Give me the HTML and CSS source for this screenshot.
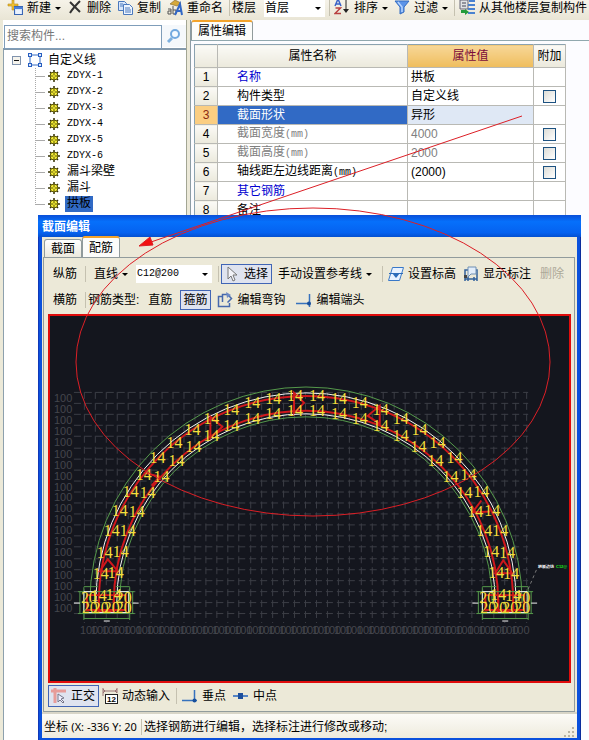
FILE: index.html
```html
<!DOCTYPE html>
<html lang="zh-CN">
<head>
<meta charset="utf-8">
<title>截面编辑</title>
<link rel="stylesheet" href="styles.css">
</head>
<body>
<div class="app">
  <header class="toolbar">
    <button class="tool"><svg class="icon" viewBox="0 0 16 16"><path d="M5 0h2v4h4v2H7v4H5V6H1V4h4z" fill="#f0c030" stroke="#b98a1c" stroke-width=".6"/><rect x="7.500" y="6.500" width="8" height="8" fill="#d5e4fb" stroke="#3a66b5"/><path d="M7 7h9v2H7z" fill="#4b7fd6"/><path d="M9 11h5M9 13h5" stroke="#fff"/></svg>新建<i class="caret"></i></button>
    <button class="tool"><svg class="icon" viewBox="0 0 16 16"><path d="M3 2l10 10M13 1C9 5 6 8 3 13" stroke="#333" stroke-width="2" fill="none"/></svg>删除</button>
    <button class="tool"><svg class="icon" viewBox="0 0 16 16"><path d="M1.500 1.500h6l2 2v7h-8z" fill="#d7e6fb" stroke="#4a78bd"/><path d="M6.500 4.500h6l3 3v7h-9z" fill="#edf4ff" stroke="#4a78bd"/><path d="M3 4h3M3 6h3M8 8h5M8 10h6M8 12h6" stroke="#4a78bd"/></svg>复制</button>
    <button class="tool"><svg class="icon" viewBox="0 0 16 16"><path d="M3 4l5-4 6 3-4 3z" fill="#d6a93b" stroke="#80652b" stroke-width=".6"/><path d="M1 9h3v5H1v-3h3M6 6v8h3v-4H6" stroke="#555" fill="none"/><path d="M8 15l5-11 2 11M10 11h5" stroke="#3267c5" stroke-width="2" fill="none"/></svg>重命名</button>
    <span class="sep"></span>
    <label for="floor">楼层</label>
    <span class="combo floor"><select id="floor"><option>首层</option></select><i class="caret"></i></span>
    <span class="sep"></span>
    <button class="tool"><svg class="icon" viewBox="0 0 16 16"><path d="M1 6l3-7 3 7M2 4h4" stroke="#3a62c8" fill="none" stroke-width="1.500"/><path d="M1.500 8h5L1 13.500h6" stroke="#b94040" fill="none" stroke-width="1.500"/><path d="M12 0v10" stroke="#222"/><path d="M9 9h6l-3 4z" fill="#222"/></svg>排序<i class="caret"></i></button>
    <button class="tool"><svg class="icon" viewBox="0 0 16 16"><path d="M1 1h14l-5 6v5l-4 2V7z" fill="#5c94e8" stroke="#356cc0"/><path d="M4 2l4 5v5" stroke="#b8d5ff" stroke-width="1.500" fill="none"/></svg>过滤<i class="caret"></i></button>
    <span class="sep"></span>
    <button class="tool"><svg class="icon" viewBox="0 0 16 16"><path d="M1 0h8v9H1z" fill="#e0e2e4" stroke="#667"/><path d="M3 3h4M3 6h4" stroke="#445"/><path d="M10 1h6M9 5h7M9 9h7M9 13h7" stroke="#4a82d0" stroke-width="2"/><path d="M2 10h4v-1l4 3-4 3v-2H2z" fill="#249b3b"/></svg>从其他楼层复制构件</button>
  </header>

  <main class="workspace">
    <aside class="browser">
      <div class="search">
        <input type="text" aria-label="搜索构件" placeholder="搜索构件...">
        <button aria-label="搜索"><svg class="icon" viewBox="0 0 16 16"><path d="M6 10l-4 4" stroke="#7db0df" stroke-width="3"/><circle cx="9" cy="6" r="4" fill="#f4faff" stroke="#72a9df" stroke-width="2"/></svg></button>
      </div>
      <div class="tree">
        <div class="root"><svg class="toggle" viewBox="0 0 9 9"><rect x=".5" y=".5" width="8" height="8" fill="#f5f3ec" stroke="#8093ad"/><path d="M2 4.500h5" stroke="#111"/></svg><svg class="icon" viewBox="0 0 16 16"><path d="M3 3h10v10H3z" fill="none" stroke="#346ac4"/><path d="M1 1h4v4H1zM11 1h4v4h-4zM1 11h4v4H1zM11 11h4v4h-4z" fill="#275ec0"/><path d="M2 2h2v2H2zM12 2h2v2h-2zM2 12h2v2H2zM12 12h2v2h-2z" fill="#dfeafa"/></svg>自定义线</div>
        <ul id="members"></ul>
      </div>
    </aside>

    <section class="properties">
      <div class="tabs"><button class="tab active">属性编辑</button></div>
      <div class="sheet">
        <table>
          <colgroup><col class="c-num"><col class="c-name"><col class="c-value"><col class="c-add"></colgroup>
          <thead><tr><th></th><th>属性名称</th><th class="current">属性值</th><th>附加</th></tr></thead>
          <tbody>
            <tr><th>1</th><td class="link">名称</td><td>拱板</td><td></td></tr>
            <tr><th>2</th><td>构件类型</td><td>自定义线</td><td><input type="checkbox" aria-label="附加 构件类型"></td></tr>
            <tr class="selected"><th>3</th><td>截面形状</td><td>异形</td><td></td></tr>
            <tr class="muted"><th>4</th><td>截面宽度<span class="mono">(mm)</span></td><td>4000</td><td><input type="checkbox" aria-label="附加 截面宽度"></td></tr>
            <tr class="muted"><th>5</th><td>截面高度<span class="mono">(mm)</span></td><td>2000</td><td><input type="checkbox" aria-label="附加 截面高度"></td></tr>
            <tr><th>6</th><td>轴线距左边线距离<span class="mono">(mm)</span></td><td>(2000)</td><td><input type="checkbox" aria-label="附加 轴线距左边线距离"></td></tr>
            <tr><th>7</th><td class="link">其它钢筋</td><td></td><td></td></tr>
            <tr><th>8</th><td>备注</td><td></td><td></td></tr>
          </tbody>
        </table>
      </div>
    </section>
  </main>

  <section class="dialog" role="dialog" aria-labelledby="dialog-title">
    <h1 id="dialog-title">截面编辑</h1>
    <div class="dialog-body">
      <div class="tabs"><button class="tab">截面</button><button class="tab active">配筋</button></div>
      <div class="pane">
        <div class="bar">
          <button class="tool first">纵筋</button>
          <span class="sep"></span>
          <button class="tool wide">直线<i class="caret"></i></button>
          <span class="combo rebar"><select aria-label="钢筋规格"><option>C12@200</option></select><i class="caret"></i></span>
          <span class="sep"></span>
          <button class="tool pressed"><svg class="icon" viewBox="0 0 16 16"><path d="M4 1v12l3-3 2 5 2-1-2-5h4z" fill="#f3f3f8" stroke="#777"/></svg>选择</button>
          <button class="tool wide">手动设置参考线<i class="caret"></i></button>
          <span class="sep"></span>
          <button class="tool"><svg class="icon" viewBox="0 0 16 16"><path d="M4.500 1.500h11l-4 13h-11z" fill="#e8f2ff" stroke="#3978c8"/><path d="M1 7.500h14" stroke="#2c6cba"/><path d="M4 7h8l-4 5z" fill="#2c6cba"/></svg>设置标高</button>
          <button class="tool"><svg class="icon" viewBox="0 0 16 16"><path d="M2 15V4h3M14 15V4h-3M2 13h12M5 15v-4M11 15v-4" stroke="#31609b" stroke-width="1.500" fill="none"/><path d="M5 1h8v7H8l-3 3z" fill="#e2edfa" stroke="#6f8fb3"/><path d="M1 9h3v3H1z" fill="#444"/></svg>显示标注</button>
          <button class="tool" disabled>删除</button>
        </div>
        <div class="bar">
          <button class="tool first">横筋</button>
          <span class="sep"></span>
          <span class="caption">钢筋类型:</span>
          <button class="tool wide">直筋</button>
          <button class="tool pressed">箍筋</button>
          <button class="tool wide"><svg class="icon" viewBox="0 0 16 16"><path d="M5 4.500H1.500v10h11V11" fill="none" stroke="#4668ac" stroke-width="1.500"/><path d="M5.500 10V2.500h5l4 4-4 4" fill="none" stroke="#4668ac" stroke-width="1.500"/><path d="M9 0l5 3-4 3" fill="#6c89c4"/></svg>编辑弯钩</button>
          <button class="tool"><svg class="icon" viewBox="0 0 16 16"><path d="M0 11.500h13M13.500 2v13" stroke="#3672bd" stroke-width="1.500"/><circle cx="13" cy="11.500" r="2" fill="#174f9c"/></svg>编辑端头</button>
        </div>
        <div class="canvas"><svg id="drawing" viewBox="49 316 521 366" role="img" aria-label="拱板截面配筋图"></svg></div>
        <div class="bar snap">
          <button class="tool pressed"><svg class="icon" viewBox="0 0 16 16"><path d="M0 3h15M4 0v15" stroke="#e79c99" stroke-width="3"/><path d="M7 6v8l2-2 3 3 1-1-3-3 3-1z" fill="#eef" stroke="#778"/></svg>正交</button>
          <button class="tool"><svg class="icon" viewBox="0 0 16 16"><path d="M1 0v8M15 0v5M1 3h14M1 5l2-2-2-2M15 5l-2-2 2-2" stroke="#9a7474" fill="none"/><rect x="3.500" y="6.500" width="12" height="9" fill="#fff" stroke="#222"/><text x="5" y="14" class="tiny-num">12</text></svg>动态输入</button>
          <span class="sep"></span>
          <button class="tool"><svg class="icon" viewBox="0 0 16 16"><path d="M0 12.500h15M12.500 2v12" stroke="#3672bd" stroke-width="1.500"/><circle cx="12.500" cy="12.500" r="2" fill="#174f9c"/></svg>垂点</button>
          <button class="tool"><svg class="icon" viewBox="0 0 16 16"><path d="M0 8h15" stroke="#5585c5" stroke-width="2"/><path d="M5 5h5v6H5z" fill="#1d4f9d"/></svg>中点</button>
        </div>
      </div>
      <footer class="status"><span class="coords">坐标 <span class="tahoma">(X: -336 Y: 20</span></span><span class="sep"></span><span>选择钢筋进行编辑，选择标注进行修改或移动;</span><svg class="grip" viewBox="0 0 12 12"><path d="M9 1h2v2H9zM9 5h2v2H9zM9 9h2v2H9zM5 5h2v2H5zM5 9h2v2H5zM1 9h2v2H1z" fill="#b8b4a2"/></svg></footer>
    </div>
  </section>

  <svg class="callout" viewBox="0 0 589 740" aria-hidden="true"><ellipse cx="313" cy="362" rx="237" ry="154"/><path d="M522 116L148 243"/><path class="head" d="M139 246l11-9 3 8z"/></svg>
</div>
<script src="drawing.js"></script>
</body>
</html>
```
FILE: styles.css
```css
* { box-sizing: border-box; }
body {
  margin: 0;
  background: #fff;
  color: #000;
  font: 12px/16px "Liberation Sans", "Noto Sans CJK SC", sans-serif;
}
button, input, select { font: inherit; color: inherit; margin: 0; }
button { padding: 0; border: 0; background: none; }
svg { display: block; }
.app { position: relative; height: 100vh; overflow: hidden; display: flex; flex-direction: column; }
.icon { width: 16px; height: 16px; flex: none; }

.toolbar, .bar { display: flex; align-items: center; white-space: nowrap; }
.toolbar {
  flex: none;
  height: 20px;
  padding: 0 0 4px 5px;
  background: linear-gradient(#f6f3e9, #e9e5d5);
  overflow: hidden;
}
.tool { display: flex; align-items: center; gap: 4px; flex: none; height: 20px; padding: 0 3px 0 2px; border: 1px solid transparent; }
.toolbar .tool { padding: 0 3px 0 1px; }
.tool.wide { padding: 0 7px 0 5px; }
.tool.first { padding: 0 5px 0 4px; }
.tool:disabled { color: #aca899; padding-left: 4px; }
.tool.pressed { border-color: #4165b5; background: #dfe3ef; }
.caret { border: 3px solid transparent; border-top-color: #000; border-bottom: 0; flex: none; }
.sep { width: 1px; height: 16px; margin: 0 2px; background: #c5c1b0; flex: none; }
.caption { margin-right: 3px; }
.combo { display: flex; align-items: center; background: #fff; flex: none; padding-right: 4px; height: 18px; }
.combo select { appearance: none; border: 0; background: transparent; padding: 0 1px; flex: 1; min-width: 0; outline: 0; }
.floor { width: 61px; margin: 0 2px 0 8px; }
.rebar { width: 76px; margin-right: 4px; }
.rebar select, .tree li, .mono { font-family: "Liberation Mono", "Noto Sans CJK SC", monospace; font-size: 10px; }

.workspace { flex: 1; min-height: 0; display: flex; background: #ece9d8; }
.browser { width: 187px; flex: none; padding-left: 3px; display: flex; flex-direction: column; border-right: 1px solid #a3a694; }
.search { display: flex; height: 30px; padding: 5px 0 1px 1px; background: #fff; border-bottom: 2px solid #8399ac; }
.search input { flex: 1; min-width: 0; height: 24px; padding: 0 2px 2px; border: 1px solid #7f9db9; background: #fff; }
.search input::placeholder { color: #777; }
.search button { width: 24px; display: grid; place-items: center; background: #f5f8fb; }
.tree { flex: 1; background: #fff; border-left: 1px solid #8da0ad; padding-top: 2px; }
.root { display: flex; align-items: center; height: 16px; padding-left: 8px; }
.root .icon { margin: 0 5px 0 6px; }
.toggle { width: 9px; height: 9px; }
.tree ul { list-style: none; margin: 0 0 0 31px; padding: 0; }
.tree li { display: flex; align-items: center; height: 16px; background: linear-gradient(#aaa, #aaa) 0 8px / 10px 1px no-repeat, repeating-linear-gradient(#aaa 0 1px, transparent 1px 2px) 0 0 / 1px 100% no-repeat; }
.tree li:last-child { background-size: 10px 1px, 1px 8px; }
.tree li svg { width: 12px; height: 12px; margin: 0 5px 0 13px; }
.tree li span { padding: 0 2px; }
.tree li .cjk { font-size: 12px; }
.tree li .chosen { background: #316ac5; }

.properties { flex: 1; min-width: 0; margin-left: 3px; background: #fcfcff; display: flex; flex-direction: column; border-left: 1px solid #8c9ca5; }
.tabs { display: flex; align-items: flex-end; }
.tab { height: 18px; padding: 0 6px; border: 1px solid #919b9c; border-bottom: 0; background: linear-gradient(#fff, #ece9dd); border-radius: 3px 3px 0 0; }
.tab.active { height: 21px; border-top: 2px solid #f3a32b; background: #fcfcfa; }
.sheet { flex: 1; border-top: 1px solid #91a8ae; padding: 3px 0 0 3px; }
.properties .tabs { height: 20px; background: #fcfcff; }
.properties .tab { height: 20px; }
table { table-layout: fixed; width: 371px; border-collapse: collapse; border-top: 1px solid #8ba2b0; border-left: 1px solid #8ba2b0; background: #fff; }
.c-num { width: 23px; }
.c-name { width: 190px; }
.c-value { width: 126px; }
.c-add { width: 32px; }
th, td { height: 19px; padding: 0 0 0 3px; border: 1px solid #b9b9b4; border-width: 0 1px 1px 0; text-align: left; font-weight: 400; line-height: 16px; white-space: nowrap; }
th { padding: 0; text-align: center; background: linear-gradient(#fbfaf6, #ebe9dc); }
thead th { height: 23px; }
thead .current { background: linear-gradient(#f7d798, #efbd5c); color: #7b0b3a; }
td:nth-child(2) { padding-left: 19px; }
td:nth-child(4) { padding: 0; text-align: center; }
.link { color: #0000d0; }
.muted td { color: #808080; }
.selected th { background: #fbce82; color: #8b2a12; }
.selected td:nth-child(2) { background: #316ac5; color: #fff; }
.selected td:nth-child(3) { background: #dfe8f5; }
table input { appearance: none; display: block; width: 13px; height: 13px; margin: 0 auto; border: 1px solid #1d5281; background: linear-gradient(135deg, #dcdcd6, #fff); }

.dialog {
  position: absolute;
  top: 215px; right: 8px; bottom: 0; left: 38px;
  display: flex;
  flex-direction: column;
  padding: 0 4px 2px;
  background: #0a50dc;
  box-shadow: inset 1px 0 #1138b8, inset -1px 0 #0a2c9c;
}
.dialog h1 { flex: none; height: 22px; margin: 0 -4px; padding: 0 4px; font-size: 12px; line-height: 24px; color: #fff; background: linear-gradient(#0a4fd8, #0670fb 30%, #0562f0 80%, #0450d0); }
.dialog-body { flex: 1; min-height: 0; display: flex; flex-direction: column; background: #ece9d8; }
.dialog .tabs { flex: none; height: 20px; padding-left: 2px; }
.pane { flex: 1; min-height: 0; display: flex; flex-direction: column; margin: 0 2px 0 1px; padding: 3px 3px 2px 4px; border: 1px solid #919b9c; }
.bar { height: 26px; }
.canvas { flex: 1; min-height: 0; margin-top: 1px; border: 2px solid #e00c0c; background: #14161e; }
.canvas svg { width: 100%; height: 100%; }
.snap .tool { height: 22px; }
.status { flex: none; display: flex; align-items: center; height: 26px; padding: 2px 2px 0; background: linear-gradient(#fcfbf7, #eeebdd); border-top: 2px solid #d8d5c7; white-space: nowrap; }
.coords { width: 95px; overflow: hidden; }
.tahoma { font-family: "Noto Sans", sans-serif; font-size: 11px; }
.grip { width: 12px; height: 12px; margin-left: auto; align-self: flex-end; }
.tiny-num { font: 700 8px "Liberation Sans", sans-serif; }

.grid { stroke: #3c3e46; stroke-dasharray: 7 4; fill: none; }
.scale { fill: #44464d; font: 11px "Liberation Sans", sans-serif; }
.green { stroke: #559a4b; fill: none; }
.white { stroke: #f2f2f2; fill: none; }
.red { stroke: #cf171c; stroke-width: 2; fill: none; }
.mark { fill: #f4df3b; font: 16px "Liberation Serif", serif; text-anchor: middle; }
.note { fill: #fff; font: 700 4px "Liberation Sans", "Noto Sans CJK SC", sans-serif; }
.note.go { fill: #18f018; }
.callout { position: absolute; top: 0; left: 0; width: 589px; height: 740px; pointer-events: none; fill: none; stroke: #dc1f26; }
.callout .head { fill: #f21212; }
```
FILE: drawing.js
```js
const gear = '<svg viewBox="0 0 12 12"><path d="M6 0v12M0 6h12M2 2l8 8M10 2l-8 8" stroke="#333008" stroke-width="1.500"/><circle cx="6" cy="6" r="4" fill="#f4ec33" stroke="#5b5408"/><path d="M6 2v8M2 6h8" stroke="#5b5408"/><circle cx="6" cy="6" r="1" fill="#f4ec33"/></svg>';
const names = ['ZDYX-1', 'ZDYX-2', 'ZDYX-3', 'ZDYX-4', 'ZDYX-5', 'ZDYX-6', '漏斗梁壁', '漏斗', '拱板'];
document.getElementById('members').innerHTML = names.map((n, i) =>
  `<li>${gear}<span class="${i > 5 ? 'cjk' : ''}${i === 8 ? ' chosen' : ''}">${n}</span></li>`).join('');

const out = [];
const cx = 306, cy = 604;
const path = (cls, d) => out.push(`<path class="${cls}" d="${d}"/>`);
const text = (cls, x, y, t) => out.push(`<text class="${cls}" x="${x}" y="${y}">${t}</text>`);

// Reference grid with its spacing labels
for (let i = 0; i <= 40; i++) path('grid', `M${Math.round(83 + i * 11.1) + 0.5} 392V624`);
for (let i = 0; i <= 20; i++) {
  const y = Math.round(392 + i * 11.1);
  path('grid', `M73 ${y + 0.5}H529`);
  if (i < 20) text('scale', 53, y + 10, '100');
}
for (let i = 0; i < 40; i++) text('scale', Math.round(79 + i * 11.1), 635, '100');

// Arch outline, cover lines and bars
const arc = (cls, r) => path(cls, `M${cx - r} ${cy}A${r} ${r} 0 0 1 ${cx + r} ${cy}`);
arc('green', 217);
arc('green', 187);
arc('red', 208);
arc('red', 193);
arc('white', 211);
arc('white', 190);
path('red', 'M98 600V613H113V600M499 600V613H514V600');
path('red', 'M107 560L99 572H117ZM504 561L496 574H513ZM482 501L473 513L491 512M294 393V413L304 403ZM210 417L222 427L210 438ZM380 406L368 416L380 424ZM143 473L159 477L151 486');

// Footings
for (const x of [83, 483]) {
  path('green', `M${x - 4} 592V614M${x + 49} 592V614M${x - 6} 592.5H${x + 51}M${x - 6} 614.5H${x + 51}M${x} 619.5H${x + 46}M${x} 588V621M${x + 46} 588V621M${x} 587.5H${x + 14}M${x + 32} 587.5H${x + 46}`);
  path('white', `M${x + 12} 592.5H${x}V613.5H${x + 45}V592.5H${x + 34}M${x - 10} 604H${x - 4}M${x + 49} 604H${x + 55}M${x + 20} 622H${x + 26}`);
  path('red', `M${x + 3} 596H${x + 42}V611H${x + 3}Z`);
  for (const dx of [5, 40]) text('mark', x + dx, 604, '20');
  for (const dx of [6, 17, 28, 40]) text('mark', x + dx, 614, '20');
}

// Bar diameters
const ring = (r, start, step, count) => {
  for (let i = 0; i < count; i++) {
    const a = (start + step * i) * Math.PI / 180;
    for (const side of [-1, 1]) text('mark', Math.round(cx + side * r * Math.sin(a)), Math.round(cy - r * Math.cos(a) + 5), '14');
  }
};
ring(208, 3, 6.08, 15);
ring(193, 3.4, 6.48, 14);

out.push('<path d="M529 590L538 569" stroke="#777" stroke-dasharray="3 3"/>');
text('note', 539, 569, '拱板边线');
text('note go', 557, 569, 'C12@');
document.getElementById('drawing').innerHTML = out.join('');
```
